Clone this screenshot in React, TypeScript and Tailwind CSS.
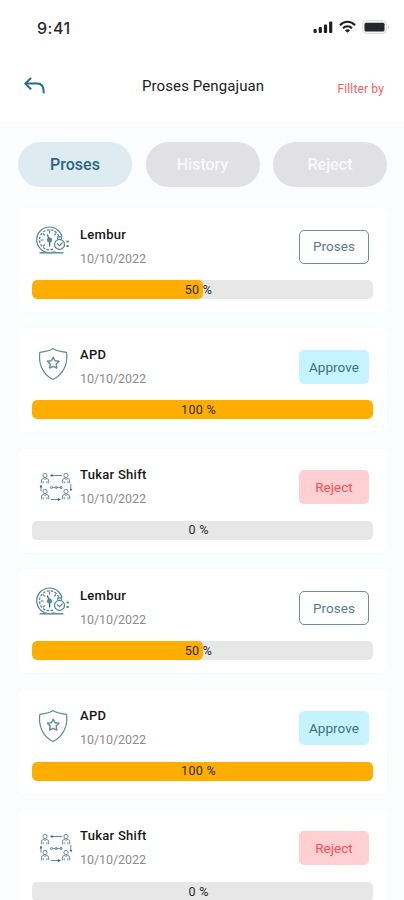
import React, { useState } from 'react';

type Status = 'Proses' | 'Approve' | 'Reject';

const TABS = ['Proses', 'History', 'Reject'];

const submissions: { id: number; title: string; date: string; progress: number; status: Status }[] = [
  { id: 1, title: 'Lembur', date: '10/10/2022', progress: 50, status: 'Proses' },
  { id: 2, title: 'APD', date: '10/10/2022', progress: 100, status: 'Approve' },
  { id: 3, title: 'Tukar Shift', date: '10/10/2022', progress: 0, status: 'Reject' },
  { id: 4, title: 'Lembur', date: '10/10/2022', progress: 50, status: 'Proses' },
  { id: 5, title: 'APD', date: '10/10/2022', progress: 100, status: 'Approve' },
  { id: 6, title: 'Tukar Shift', date: '10/10/2022', progress: 0, status: 'Reject' },
];

const STATUS_STYLES: Record<Status, string> = {
  Proses: 'border border-[#6f8ba2] bg-white text-[#5b7a92]',
  Approve: 'bg-[#c5f3ff] text-[#3f6f82]',
  Reject: 'bg-[#ffd0d2] text-[#ff4c55]',
};

const ICONS: Record<string, () => React.JSX.Element> = {
  Lembur: OvertimeIcon,
  APD: ShieldIcon,
  'Tukar Shift': ShiftIcon,
};

export default function App() {
  const [tab, setTab] = useState('Proses');

  return (
    <div className="h-[900px] w-[404px] overflow-hidden bg-[#fafcfe] font-['Roboto',sans-serif]">
      <header className="h-[122px] bg-white shadow-[0_1px_2px_rgba(0,0,0,0.02)]">
        <StatusBar />
        <div className="flex h-[60px] items-center pl-6 pr-5">
          <button aria-label="Kembali" className="w-[118px]">
            <BackIcon />
          </button>
          <h1 className="flex-1 whitespace-nowrap text-[15px] leading-5 tracking-[0.1px] text-[#1c1c1c]">Proses Pengajuan</h1>
          <button className="mt-1.5 text-[12px] leading-4 tracking-[0.15px] text-[#ff5a62]">Fillter by</button>
        </div>
      </header>

      <nav className="flex justify-between pl-[18px] pr-[17px] pt-[20px]">
        {TABS.map((name) => (
          <button
            key={name}
            onClick={() => setTab(name)}
            className={`h-[45px] w-[114px] rounded-full pt-px text-[16px] font-medium ${
              tab === name ? 'bg-[#deecf1] text-[#2a6684]' : 'bg-[#e1e1e3] text-[#f8f8f9]'
            }`}
          >
            {name}
          </button>
        ))}
      </nav>

      <main className="flex flex-col gap-[16.4px] pl-[18px] pr-[17px] pt-[21px]">
        {submissions.map((item) => (
          <SubmissionCard key={item.id} {...item} />
        ))}
      </main>
    </div>
  );
}

function SubmissionCard({ title, date, progress, status }: any) {
  const Icon = ICONS[title];
  return (
    <div className="h-[104px] shrink-0 rounded-md bg-white px-[14px] shadow-[0_0_3px_rgba(0,0,0,0.025)]">
      <div className="flex h-[72px] pr-1">
        <div className="w-[48px] pt-[17px]">
          <Icon />
        </div>
        <div className="flex-1 pt-[18.5px]">
          <p className="text-[13px] font-medium leading-4 tracking-[0.28px] text-[#161616]">{title}</p>
          <p className="mt-2 text-[12.5px] leading-4 tracking-[-0.05px] text-[#8d8d8d]">{date}</p>
        </div>
        <button
          className={`mt-[21.5px] h-[34px] w-[70px] rounded-[5px] text-[13.5px] tracking-[0.05px] ${STATUS_STYLES[status as Status]}`}
        >
          {status}
        </button>
      </div>
      <div className="relative h-[19px] overflow-hidden rounded-[5px] bg-[#e7e7e7]">
        <div className="h-full rounded-[5px] bg-[#ffae00]" style={{ width: `${progress}%` }} />
        <span className="absolute inset-0 flex items-center justify-center pr-2 pt-px text-[12.5px] tracking-[0.3px] text-[#2a2a2a]">
          {progress} %
        </span>
      </div>
    </div>
  );
}

function StatusBar() {
  return (
    <div className="flex h-[56px] items-center justify-between pl-[37px] pr-[14px]">
      <span className="font-['Inter',sans-serif] text-[16px] font-medium tracking-[0.5px] text-[#2b2b2b]">9:41</span>
      <div className="flex items-center gap-[6px] pb-[3px]">
        <svg width="20" height="12" viewBox="0 0 20 12" fill="#1d1f22">
          <rect x="0.5" y="8" width="3.2" height="4" rx="1" />
          <rect x="5.7" y="6" width="3.2" height="6" rx="1" />
          <rect x="10.9" y="3.4" width="3.2" height="8.6" rx="1" />
          <rect x="16.1" y="0.5" width="3.2" height="11.5" rx="1" />
        </svg>
        <svg width="17" height="13" viewBox="0 0 17 13" fill="none" stroke="#1d1f22" strokeWidth="2">
          <path d="M1 5.2C5.2 0.7 11.8 0.7 16 5.2" />
          <path d="M4 8.2C6.5 5.6 10.5 5.6 13 8.2" />
          <path d="M8.5 12.8L5.9 10.2C7.3 8.9 9.7 8.9 11.1 10.2Z" fill="#1d1f22" stroke="none" />
        </svg>
        <svg width="28" height="14" viewBox="0 0 28 14">
          <rect x="0.5" y="0.5" width="24" height="13" rx="4" fill="#f4f5f6" stroke="#dcdfe2" />
          <rect x="2.5" y="2.8" width="20" height="8.6" rx="1.5" fill="#24272c" />
          <path d="M26 5v4c1.5-.6 1.5-3.4 0-4Z" fill="#c5c8cb" />
        </svg>
      </div>
    </div>
  );
}

function BackIcon() {
  return (
    <svg width="22" height="18" viewBox="0 0 22 18" fill="none" stroke="#226b91" strokeWidth="2" strokeLinecap="round" strokeLinejoin="round">
      <path d="M6.5 1.5L1.2 6.6L6.5 11.7" />
      <path d="M1.8 6.6H13.5C17.5 6.6 19.7 9.5 19.7 15.5" />
    </svg>
  );
}

function OvertimeIcon() {
  return (
    <svg width="38" height="32" viewBox="0 0 38 32" fill="none" stroke="#55809b" strokeWidth="1.2">
      <circle cx="17.5" cy="14.8" r="12.8" />
      <circle cx="17.5" cy="14.8" r="10" strokeDasharray="2.6 1.4" />
      <path d="M17.5 5.5v3M8.5 15h3M11 8.5l1.8 1.8M24 8.5l-1.8 1.8M11 21.3l1.8-1.8" />
      <path d="M15.3 9.5l1.7 4.5M17.6 17v4.5" stroke="#2d6686" />
      <circle cx="17.5" cy="15" r="1.9" fill="#3d9a9d" />
      {/* stopwatch, over the lower right of the dial */}
      <rect x="22" y="11.5" width="12" height="15" fill="#fff" stroke="none" />
      <circle cx="27.5" cy="19.4" r="5" />
      <path d="M25 18.4l2.5 2.3 3.1-3.1M25.7 14v-2.2h3.6V14" />
      <path d="M34.5 16.5h2.2M34.5 21h2.2" strokeWidth="2" />
      <path d="M7.5 27.8h24" strokeWidth="1.6" stroke="#6893a9" />
    </svg>
  );
}

function ShieldIcon() {
  return (
    <svg width="42" height="36" viewBox="0 0 42 36" fill="none" stroke="#5f8aa0" strokeWidth="1.2" strokeLinejoin="round">
      <path d="M21 3.5C18 5.9 12.8 6.7 7.8 7.3C6.4 17.3 9.5 28.8 21 34.5C32.5 28.8 35.9 17.3 34.6 7.3C29.2 6.7 24 5.9 21 3.5Z" />
      <path d="M21.2 12.2l1.8 3.5 4 .6-2.8 2.8.6 4-3.6-1.8-3.6 1.8.6-4-2.8-2.8 4-.6Z" strokeWidth="1.4" />
    </svg>
  );
}

function Person({ x, y }: { x: number; y: number }) {
  return (
    <g transform={`translate(${x} ${y})`}>
      <circle cx="4" cy="2.5" r="2.1" />
      <path d="M0.4 10.3V8.2C0.4 6.3 1.5 5.3 3 5.3L4 6.7L5 5.3C6.6 5.3 7.7 6.3 7.7 8.2V10.3M2.2 10.3V8.2M5.9 10.3V8.2" />
    </g>
  );
}

function ShiftIcon() {
  return (
    <svg width="42" height="36" viewBox="0 0 42 36" fill="none" stroke="#64899b" strokeWidth="1">
      <Person x={9} y={7} />
      <Person x={30} y={7} />
      <Person x={9} y={23} />
      <Person x={30} y={23} />
      <path d="M19 9.5h11M19 33.5h8M9 19.5v6M38.8 18v6" />
      <path d="M20.5 8l-2.5 1.5 2.5 1.5ZM26 32l3 1.5-3 1.5ZM7.7 21.5l1.3-3 1.3 3ZM37.5 23h3l-1.5 2Z" fill="#2d6686" stroke="none" />
      <path d="M19.5 21.5h10" strokeWidth="0.8" />
      <circle cx="19.5" cy="21.5" r="1.1" />
      <circle cx="24.3" cy="21.5" r="1.1" />
      <circle cx="29.1" cy="21.5" r="1.1" />
    </svg>
  );
}
